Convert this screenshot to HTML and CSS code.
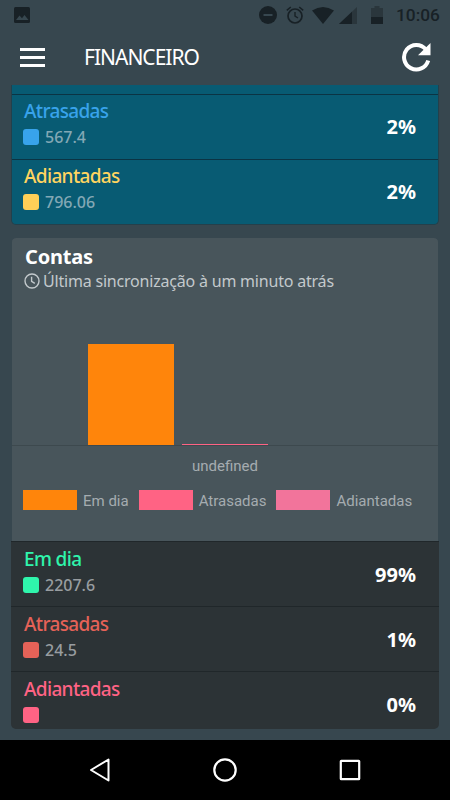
FILE: index.html
```html
<!DOCTYPE html>
<html lang="pt-BR">
<head>
  <meta charset="UTF-8">
  <meta name="viewport" content="width=device-width, initial-scale=1.0">
  <title>Financeiro</title>
  <link rel="stylesheet" href="styles.css">
</head>
<body>
  <div class="app">
    <!-- Status bar -->
    <div class="status-bar">
      <svg class="picture" width="16" height="16" viewBox="0 0 16 16">
        <rect width="16" height="16" rx="1.5" fill="#182126"/>
        <path d="M2 13l3.500-4.500L8 11.200 10.500 8l4 5z" fill="#37474f"/>
      </svg>
      <div class="status-icons">
        <svg width="18" height="18" viewBox="0 0 18 18">
          <circle cx="9" cy="9" r="9" fill="#182126"/>
          <path d="M4.500 9h9" stroke="#37474f" stroke-width="2"/>
        </svg>
        <svg class="alarm" width="18" height="18" viewBox="0 0 18 18" fill="none" stroke="#182126">
          <circle cx="9" cy="10" r="7" stroke-width="1.700"/>
          <path d="M9 6v4.200l3 1.800" stroke-width="1.400"/>
          <path d="M.8 4.300L4.800 1M17.200 4.300L13.200 1" stroke-width="1.600"/>
        </svg>
        <svg class="wifi" width="22" height="17" viewBox="0 0 22 17">
          <path d="M0 3.500Q11-3.500 22 3.500L11 17z" fill="#182126"/>
        </svg>
        <svg class="signal" width="18" height="17" viewBox="0 0 18 17">
          <path d="M18 0v17H0z" fill="#2a363c"/>
          <path d="M13 4.700V17H0z" fill="#182126"/>
        </svg>
        <svg class="battery" width="12" height="18" viewBox="0 0 12 18">
          <path d="M3.500 0h5v2H12v16H0V2h3.500z" fill="#2a363c"/>
          <path d="M0 11h12v7H0z" fill="#182126"/>
        </svg>
        <span class="clock">10:06</span>
      </div>
    </div>

    <!-- Header -->
    <header class="header">
      <div class="menu">
        <span></span>
        <span></span>
        <span></span>
      </div>
      <h1>FINANCEIRO</h1>
      <svg class="refresh" width="30" height="30" viewBox="0 0 30 30">
        <path d="M24.800 7.300A12.300 12.300 0 1 0 27.200 18.500" fill="none" stroke="#fff" stroke-width="4"/>
        <path d="M29.500 1v12.300H17z" fill="#fff"/>
      </svg>
    </header>

    <!-- Content -->
    <main class="content">
      <section class="card blue">
        <div class="row">
          <div>
            <h3 class="sky">Atrasadas</h3>
            <p><i class="dot bg-sky"></i>567.4</p>
          </div>
          <strong>2%</strong>
        </div>
        <div class="row">
          <div>
            <h3 class="yellow">Adiantadas</h3>
            <p><i class="dot bg-yellow"></i>796.06</p>
          </div>
          <strong>2%</strong>
        </div>
      </section>

      <section class="card dark">
        <div class="summary">
          <h2>Contas</h2>
          <div class="sync">
            <svg width="16" height="16" viewBox="0 0 16 16" fill="none" stroke="#c3c9cc" stroke-width="1.400">
              <circle cx="8" cy="8" r="7"/>
              <path d="M7.600 3.800v4.500l3.200 2"/>
            </svg>
            <span>Última sincronização à um minuto atrás</span>
          </div>
          <div class="chart">
            <div class="bar orange" style="height: 101px"></div>
            <div class="bar pink" style="height: 1.5px"></div>
          </div>
          <div class="axis-label">undefined</div>
          <div class="legend">
            <i class="orange"></i><span>Em dia</span>
            <i class="pink"></i><span>Atrasadas</span>
            <i class="rose"></i><span>Adiantadas</span>
          </div>
        </div>
        <div class="row">
          <div>
            <h3 class="green">Em dia</h3>
            <p><i class="dot bg-green"></i>2207.6</p>
          </div>
          <strong>99%</strong>
        </div>
        <div class="row">
          <div>
            <h3 class="red">Atrasadas</h3>
            <p><i class="dot bg-red"></i>24.5</p>
          </div>
          <strong>1%</strong>
        </div>
        <div class="row">
          <div>
            <h3 class="hot">Adiantadas</h3>
            <p><i class="dot bg-hot"></i></p>
          </div>
          <strong>0%</strong>
        </div>
      </section>
    </main>

    <!-- Navigation bar -->
    <nav class="nav-bar">
      <svg width="24" height="26" viewBox="0 0 24 26">
        <path d="M20.500 2.500v21L3 13z" fill="none" stroke="#fff" stroke-width="2" stroke-linejoin="round"/>
      </svg>
      <svg width="26" height="26" viewBox="0 0 26 26">
        <circle cx="13" cy="13" r="10.700" fill="none" stroke="#fff" stroke-width="2.200"/>
      </svg>
      <svg width="24" height="24" viewBox="0 0 24 24">
        <rect x="2.800" y="2.800" width="18.400" height="18.400" rx=".5" fill="none" stroke="#fff" stroke-width="2.200"/>
      </svg>
    </nav>
  </div>
</body>
</html>
```

FILE: styles.css
```css
/* General styles */
* {
  box-sizing: border-box;
}

body {
  margin: 0;
  font-family: "Noto Sans", sans-serif;
  background-color: #37474f;
  color: white;
}

h1, h2, h3, p {
  margin: 0;
}

svg {
  display: block;
  flex-shrink: 0;
}

.app {
  height: 800px;
  display: flex;
  flex-direction: column;
  overflow: hidden;
}

/* Status bar */
.status-bar {
  height: 30px;
  padding: 0 10px 0 14px;
  display: flex;
  justify-content: space-between;
  align-items: center;
}

.status-icons {
  display: flex;
  align-items: center;
}

.alarm {
  margin-left: 9px;
}

.wifi {
  margin-left: 8px;
}

.signal {
  margin-left: 5px;
}

.battery {
  margin-left: 14px;
}

.clock {
  width: 44px;
  margin-left: 13px;
  font-family: Roboto, sans-serif;
  font-size: 17.3px;
  font-weight: 500;
  line-height: 20px;
  color: #182126;
  white-space: nowrap;
}

/* Header */
.header {
  height: 55px;
  padding: 0 19px 2px 20px;
  display: flex;
  align-items: center;
}

.menu {
  width: 25px;
  margin-right: 39px;
  padding-top: 2px;
  display: flex;
  flex-direction: column;
  gap: 5px;
}

.menu span {
  height: 3px;
  background-color: white;
}

.header h1 {
  flex: 1;
  font-size: 21px;
  font-weight: 400;
  line-height: 30px;
  letter-spacing: -1px;
}

/* Cards */
.content {
  flex: 1;
  padding: 0 11px;
  overflow: hidden;
}

.card {
  border-radius: 5px;
  overflow: hidden;
}

.card.blue {
  height: 140px;
  padding-top: 9px;
  margin-bottom: 13px;
  background-color: #085b73;
  border: 1px solid #24404b;
  border-top: none;
  border-radius: 0 0 5px 5px;
}

.card.dark {
  height: 491px;
}

.row {
  height: 65px;
  padding: 4px 23px 0 13px;
  display: flex;
  justify-content: space-between;
  border-top: 1px solid #20272a;
}

.dark .row {
  padding-top: 5px;
  background-color: #2c3336;
}

.blue .row {
  padding: 4px 22px 0 12px;
  border-top-color: #0b3444;
}

.row h3 {
  font-size: 19px;
  font-weight: 500;
  line-height: 25px;
  letter-spacing: -0.65px;
}

.row p {
  height: 26px;
  display: flex;
  align-items: center;
  font-size: 16px;
  font-weight: 500;
  color: #989da0;
}

.blue .row p {
  color: #83a8b5;
}

.row strong {
  padding-top: 15px;
  font-size: 20px;
  line-height: 26px;
}

.dot {
  width: 16px;
  height: 16px;
  margin-right: 6px;
  margin-left: -1px;
  border-radius: 3px;
}

.sky { color: #38a3eb; }
.yellow { color: #ffd460; }
.green { color: #2ff5ac; }
.red { color: #e56258; }
.hot { color: #ff6384; }

.bg-sky { background-color: #38a3eb; }
.bg-yellow { background-color: #ffcf57; }
.bg-green { background-color: #2ff5ac; }
.bg-red { background-color: #e56258; }
.bg-hot { background-color: #ff6384; }

/* Chart */
.summary {
  height: 303px;
  margin: 0 1px;
  padding-top: 5px;
  background-color: #48555b;
  border-radius: 4px 4px 0 0;
}

.summary h2 {
  padding-left: 13px;
  font-size: 20px;
  line-height: 27px;
  letter-spacing: -0.2px;
}

.sync {
  height: 21px;
  padding-left: 12px;
  display: flex;
  align-items: center;
  gap: 3px;
  font-size: 16px;
  letter-spacing: -0.2px;
  color: #c3c9cc;
  white-space: nowrap;
}

.chart {
  height: 155px;
  padding-left: 76px;
  display: flex;
  align-items: flex-end;
  gap: 8px;
  border-bottom: 1px solid #3d494e;
}

.bar {
  width: 86px;
}

.orange { background-color: #ff850b; }
.pink { background-color: #ff6384; }
.rose { background-color: #f2749b; }

.axis-label {
  margin-top: 9px;
  font-family: Roboto, sans-serif;
  font-size: 15px;
  line-height: 22px;
  text-align: center;
  color: #a5acb0;
}

.legend {
  margin-top: 13px;
  padding-left: 11px;
  display: flex;
  align-items: flex-start;
  font-family: Roboto, sans-serif;
  font-size: 15px;
  line-height: 20px;
  color: #a5acb0;
}

.legend i {
  width: 54px;
  height: 20px;
  margin-right: 6px;
}

.legend span {
  padding-top: 1px;
  margin-right: 10px;
  white-space: nowrap;
}

/* Navigation bar */
.nav-bar {
  height: 60px;
  display: flex;
  justify-content: center;
  align-items: center;
  gap: 100px;
  background-color: black;
}
```
